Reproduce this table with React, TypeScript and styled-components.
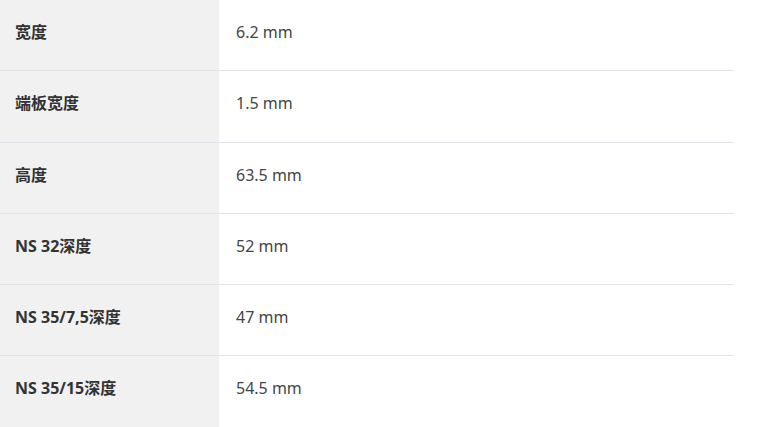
import React from 'react';
import styled, { createGlobalStyle } from 'styled-components';

const GlobalStyle = createGlobalStyle`
  body {
    margin: 0;
    background: #ffffff;
    font-family: "Noto Sans", "Noto Sans CJK SC", sans-serif;
  }
`;

const SpecTable = styled.div`
  width: 734px;
  display: grid;
  grid-template-columns: 219px 1fr;
`;

const Row = styled.div`
  display: contents;
`;

const Cell = styled.div<{ $label?: boolean }>`
  box-sizing: border-box;
  height: 71.25px;
  padding: 20px 15px 0 ${(p) => (p.$label ? '15px' : '17px')};
  line-height: 24px;
  font-size: 16px;
  font-weight: ${(p) => (p.$label ? 700 : 400)};
  color: ${(p) => (p.$label ? '#333333' : '#454545')};
  background: ${(p) => (p.$label ? '#f1f1f1' : '#ffffff')};
  border-bottom: 1px solid #e3e3e9;
  white-space: nowrap;
`;

const specs = [
  { label: '宽度', value: '6.2 mm' },
  { label: '端板宽度', value: '1.5 mm' },
  { label: '高度', value: '63.5 mm' },
  { label: 'NS 32深度', value: '52 mm' },
  { label: 'NS 35/7,5深度', value: '47 mm' },
  { label: 'NS 35/15深度', value: '54.5 mm' },
];

export default function App() {
  return (
    <>
      <GlobalStyle />
      <SpecTable>
        {specs.map((s) => (
          <Row key={s.label}>
            <Cell $label>{s.label}</Cell>
            <Cell>{s.value}</Cell>
          </Row>
        ))}
      </SpecTable>
    </>
  );
}
